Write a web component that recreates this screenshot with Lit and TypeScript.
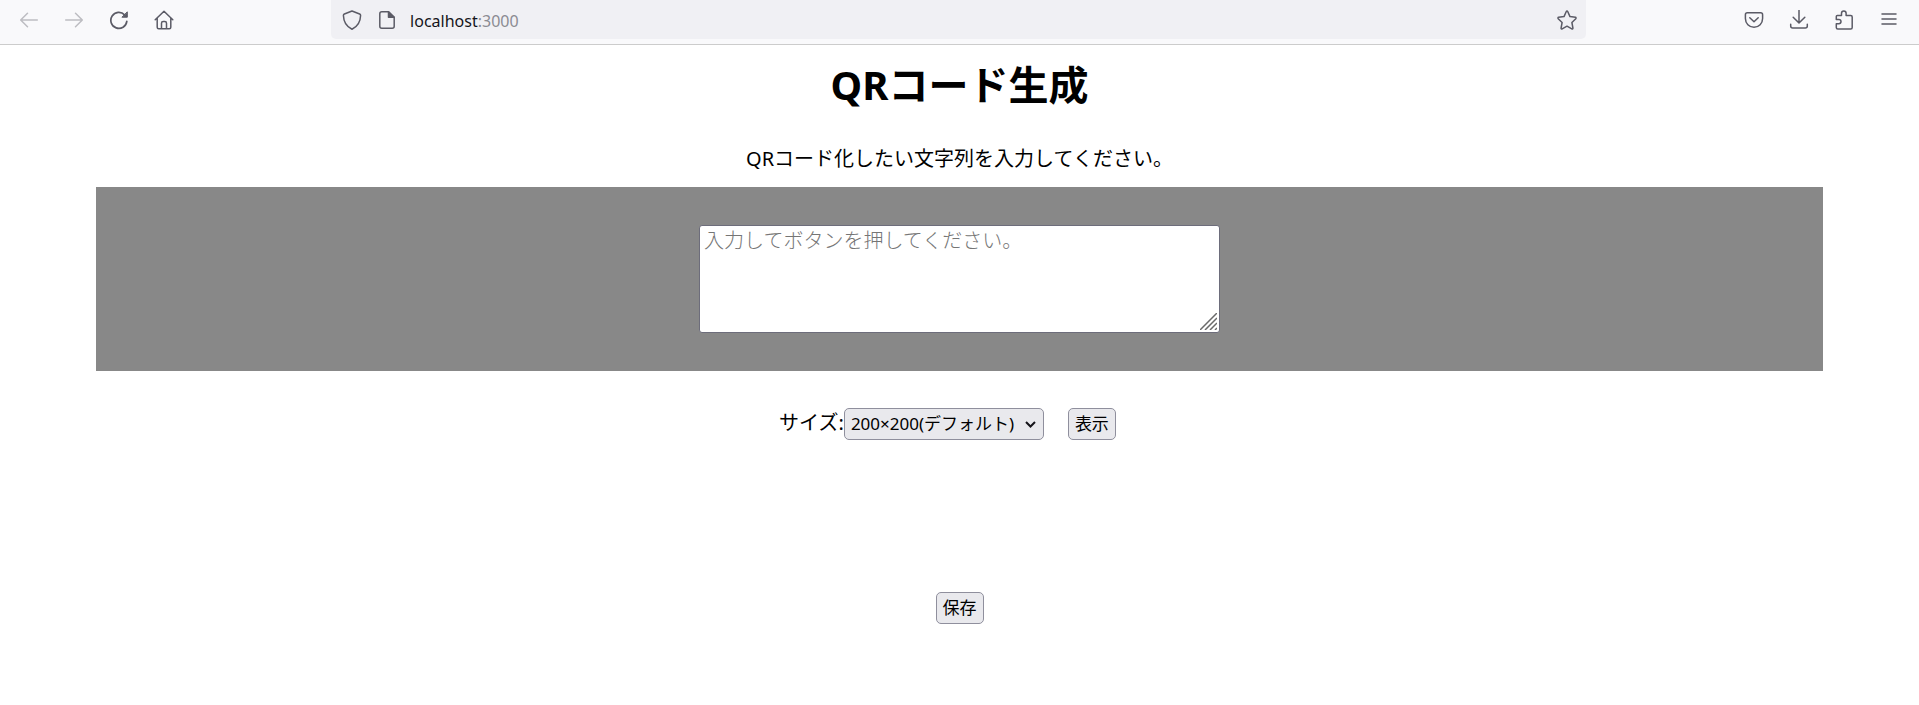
import { LitElement, html, css } from "lit";
import { customElement } from "lit/decorators.js";

@customElement("browser-bar")
export class BrowserBar extends LitElement {
  static styles = css`
    :host {
      display: block;
      font-family: "Noto Sans", "Noto Sans CJK JP", sans-serif;
    }
    .bar {
      display: flex;
      height: 44px;
      padding: 0 8px 0 6px;
      background: #f9f9fb;
      border-bottom: 1px solid #cccccc;
    }
    .group {
      display: flex;
    }
    .spacer {
      flex: 7;
    }
    button {
      display: flex;
      align-items: center;
      justify-content: center;
      width: 45px;
      height: 39px;
      padding: 0;
      border: 0;
      background: none;
      color: #5b5b66;
    }
    button:disabled {
      color: #bdbdc2;
    }
    svg {
      display: block;
      flex: none;
      width: 20px;
      height: 20px;
      fill: none;
      stroke: currentColor;
      stroke-width: 1.5;
      stroke-linecap: round;
      stroke-linejoin: round;
    }
    .address {
      flex: 60;
      display: flex;
      align-items: center;
      height: 39px;
      padding-left: 11px;
      box-sizing: border-box;
      background: #f0f0f4;
      border-radius: 0 0 5px 5px;
      color: #5b5b66;
    }
    .address svg + svg {
      margin-left: 15px;
    }
    .url {
      flex: 1;
      margin: 2px 0 0 13px;
      font-size: 16px;
      line-height: 24px;
      color: #15141a;
    }
    .port {
      color: #8b8b92;
    }
    .address button {
      width: 38px;
    }
  `;

  render() {
    return html`
      <nav class="bar" aria-label="ブラウザー">
        <div class="group">
          <button disabled aria-label="戻る">
            <svg viewBox="0 0 20 20"><path d="M18.3 10H1.8M8.5 3.2 1.7 10l6.8 6.8" /></svg>
          </button>
          <button disabled aria-label="進む">
            <svg viewBox="0 0 20 20"><path d="M1.7 10h16.500M11.500 3.200 18.300 10l-6.800 6.800" /></svg>
          </button>
          <button aria-label="再読み込み">
            <svg viewBox="0 0 20 20">
              <path d="M17.800 11.300A8 8 0 1 1 15.600 4.800" stroke-width="1.700" />
              <path d="M18.300 2.200v5h-5z" fill="currentColor" stroke-width="1" />
            </svg>
          </button>
          <button aria-label="ホーム">
            <svg viewBox="0 0 20 20">
              <path d="M1.200 9.800 10 1.300l8.800 8.500M3.200 8v9.300c0 .9.600 1.500 1.500 1.500h10.600c.9 0 1.500-.6 1.500-1.500V8M7.500 18.500v-5.300c0-1 .7-1.700 1.700-1.700h1.600c1 0 1.700.7 1.700 1.700v5.300" />
            </svg>
          </button>
        </div>
        <div class="spacer"></div>
        <div class="address">
          <svg viewBox="0 0 20 20">
            <path d="M10 1 2.400 4c-.7.300-1 .8-1 1.500C1.600 11.500 4.200 16.500 10 19.200c5.800-2.700 8.400-7.700 8.600-13.700 0-.7-.3-1.200-1-1.500z" />
          </svg>
          <svg viewBox="0 0 20 20">
            <path d="M11.500 1.800H4.800c-1.200 0-2 .8-2 2v12.400c0 1.200.8 2 2 2h10.400c1.200 0 2-.8 2-2V7.300z" />
            <path d="M11.500 1.800v5.500h5.700z" fill="currentColor" />
          </svg>
          <div class="url">localhost<span class="port">:3000</span></div>
          <button aria-label="ブックマーク">
            <svg viewBox="0 0 20 20">
              <path d="M9.300 1.500 7 6.600l-5.400.7c-.7.100-.9.900-.4 1.400l3.900 3.800-1 5.500c-.1.700.5 1.100 1.100.8l4.800-2.600 4.800 2.600c.6.300 1.200-.1 1.100-.8l-1-5.500 3.900-3.800c.5-.5.300-1.300-.4-1.400L13 6.600l-2.300-5.100c-.3-.6-1.100-.6-1.400 0z" />
            </svg>
          </button>
        </div>
        <div class="spacer"></div>
        <div class="group">
          <button aria-label="Pocket に保存">
            <svg viewBox="0 0 20 20">
              <path d="M3.300 2.800h13.400c1.100 0 1.900.8 1.900 1.900v3.800c0 4.900-3.700 8.700-8.600 8.700s-8.600-3.800-8.600-8.700V4.700c0-1.100.8-1.900 1.900-1.900zM5.800 7.700l4.200 4 4.200-4" />
            </svg>
          </button>
          <button aria-label="ダウンロード">
            <svg viewBox="0 0 20 20">
              <path d="M10 .3v12.400M4.200 7.200l5.800 5.800 5.800-5.800M1.700 14.300v1.700c0 1.200.8 2 2 2h12.600c1.200 0 2-.8 2-2v-1.700" />
            </svg>
          </button>
          <button aria-label="拡張機能">
            <svg viewBox="0 0 20 20">
              <path d="M3.300 5.500h4.200V3.300a2.300 2.300 0 0 1 4.600 0v2.200h4.600c.9 0 1.500.6 1.500 1.500v10.500c0 .9-.6 1.500-1.500 1.500H3.800c-.9 0-1.500-.6-1.500-1.500v-3.700h2.500a2.200 2.200 0 0 0 0-4.400H2.300V6.500c0-.6.400-1 1-1z" />
            </svg>
          </button>
          <button aria-label="メニュー">
            <svg viewBox="0 0 20 20"><path d="M3 4h14M3 9h14M3 14h14" /></svg>
          </button>
        </div>
      </nav>
    `;
  }
}

@customElement("app-root")
export class AppRoot extends LitElement {
  static styles = css`
    :host {
      display: block;
      background: #ffffff;
      color: #000000;
      font-family: "Noto Sans", "Noto Sans CJK JP", sans-serif;
      font-size: 20px;
      line-height: 30px;
    }
    main {
      display: flex;
      flex-direction: column;
      align-items: center;
      padding-bottom: 40px;
    }
    h1 {
      margin: 10px 0 0;
      font-size: 40px;
      line-height: 60px;
      font-weight: 700;
    }
    .lead {
      margin: 29px 0 13px;
    }
    .panel {
      display: flex;
      justify-content: center;
      width: 90%;
      padding: 38px 0;
      background: #888888;
    }
    .field {
      position: relative;
      display: flex;
      width: 521px;
      max-width: 100%;
    }
    textarea {
      width: 100%;
      height: 108px;
      box-sizing: border-box;
      margin: 0;
      padding: 1px 4px;
      border: 1px solid #6d6d7b;
      border-radius: 3px;
      background: #ffffff;
      font-family: "Noto Sans CJK JP", sans-serif;
      font-size: 20px;
      font-weight: 300;
      line-height: 26px;
      resize: none;
    }
    textarea::placeholder {
      color: #757575;
      opacity: 1;
    }
    .grip {
      position: absolute;
      right: 3px;
      bottom: 3px;
      width: 17px;
      height: 17px;
      stroke: #6a6a6a;
      stroke-width: 1.5;
      pointer-events: none;
    }
    .controls {
      display: flex;
      align-items: baseline;
      margin-top: 37px;
    }
    .picker {
      position: relative;
      display: flex;
      align-items: baseline;
    }
    select,
    button {
      height: 32px;
      box-sizing: border-box;
      margin: 0;
      border: 1px solid #8f8f9d;
      border-radius: 5px;
      background: #e9e9ed;
      color: #000000;
      font-family: inherit;
      font-size: 17px;
      line-height: 24px;
    }
    select {
      appearance: none;
      padding: 0 28px 0 6px;
    }
    .chevron {
      position: absolute;
      right: 8px;
      top: 12px;
      width: 11px;
      height: 9px;
      fill: none;
      stroke: #15141a;
      stroke-width: 2;
      pointer-events: none;
    }
    button {
      padding: 0 6px;
    }
    .show {
      margin: 0 24px;
    }
    .output {
      height: 152px;
    }
  `;

  render() {
    return html`
      <browser-bar></browser-bar>
      <main>
        <h1>QRコード生成</h1>
        <p class="lead"><label for="source">QRコード化したい文字列を入力してください。</label></p>
        <div class="panel">
          <div class="field">
            <textarea id="source" placeholder="入力してボタンを押してください。"></textarea>
            <svg class="grip" viewBox="0 0 17 17">
              <path d="M0 17 17 0M5 17 17 5M10 17l7-7M15 17l2-2" />
            </svg>
          </div>
        </div>
        <div class="controls">
          <label for="size">サイズ:</label>
          <div class="picker">
            <select id="size">
              <option>200×200(デフォルト)</option>
            </select>
            <svg class="chevron" viewBox="0 0 11 9"><path d="M1 2l4.500 4.500L10 2" /></svg>
          </div>
          <button class="show">表示</button>
        </div>
        <div class="output"></div>
        <button>保存</button>
      </main>
    `;
  }
}
